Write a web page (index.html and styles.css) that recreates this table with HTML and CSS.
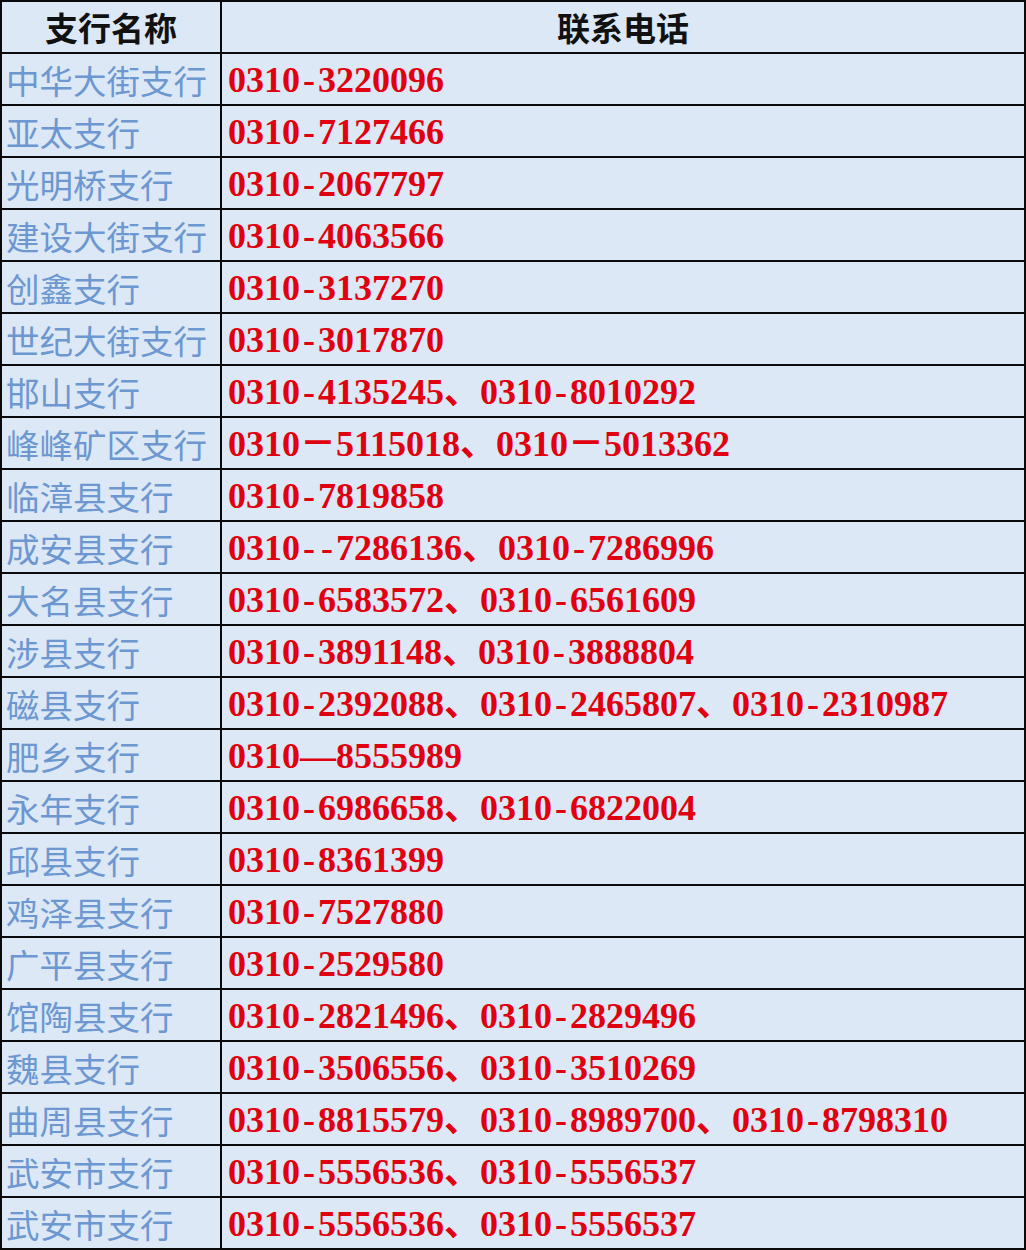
FILE: index.html
```html
<!DOCTYPE html>
<html lang="zh-CN">
<head>
<meta charset="utf-8">
<title>支行联系电话</title>
<link rel="stylesheet" href="styles.css">
</head>
<body>
<div class="table">
  <div class="cell head">支行名称</div>
  <div class="cell head center">联系电话</div>

  <div class="cell name">中华大街支行</div><div class="cell tel">0310<span class="d">-</span>3220096</div>
  <div class="cell name">亚太支行</div><div class="cell tel">0310<span class="d">-</span>7127466</div>
  <div class="cell name">光明桥支行</div><div class="cell tel">0310<span class="d">-</span>2067797</div>
  <div class="cell name">建设大街支行</div><div class="cell tel">0310<span class="d">-</span>4063566</div>
  <div class="cell name">创鑫支行</div><div class="cell tel">0310<span class="d">-</span>3137270</div>
  <div class="cell name">世纪大街支行</div><div class="cell tel">0310<span class="d">-</span>3017870</div>
  <div class="cell name">邯山支行</div><div class="cell tel">0310<span class="d">-</span>4135245、0310<span class="d">-</span>8010292</div>
  <div class="cell name">峰峰矿区支行</div><div class="cell tel">0310－5115018、0310－5013362</div>
  <div class="cell name">临漳县支行</div><div class="cell tel">0310<span class="d">-</span>7819858</div>
  <div class="cell name">成安县支行</div><div class="cell tel">0310<span class="d">-</span><span class="d">-</span>7286136、0310<span class="d">-</span>7286996</div>
  <div class="cell name">大名县支行</div><div class="cell tel">0310<span class="d">-</span>6583572、0310<span class="d">-</span>6561609</div>
  <div class="cell name">涉县支行</div><div class="cell tel">0310<span class="d">-</span>3891148、0310<span class="d">-</span>3888804</div>
  <div class="cell name">磁县支行</div><div class="cell tel">0310<span class="d">-</span>2392088、0310<span class="d">-</span>2465807、0310<span class="d">-</span>2310987</div>
  <div class="cell name">肥乡支行</div><div class="cell tel">0310—8555989</div>
  <div class="cell name">永年支行</div><div class="cell tel">0310<span class="d">-</span>6986658、0310<span class="d">-</span>6822004</div>
  <div class="cell name">邱县支行</div><div class="cell tel">0310<span class="d">-</span>8361399</div>
  <div class="cell name">鸡泽县支行</div><div class="cell tel">0310<span class="d">-</span>7527880</div>
  <div class="cell name">广平县支行</div><div class="cell tel">0310<span class="d">-</span>2529580</div>
  <div class="cell name">馆陶县支行</div><div class="cell tel">0310<span class="d">-</span>2821496、0310<span class="d">-</span>2829496</div>
  <div class="cell name">魏县支行</div><div class="cell tel">0310<span class="d">-</span>3506556、0310<span class="d">-</span>3510269</div>
  <div class="cell name">曲周县支行</div><div class="cell tel">0310<span class="d">-</span>8815579、0310<span class="d">-</span>8989700、0310<span class="d">-</span>8798310</div>
  <div class="cell name">武安市支行</div><div class="cell tel">0310<span class="d">-</span>5556536、0310<span class="d">-</span>5556537</div>
  <div class="cell name">武安市支行</div><div class="cell tel">0310<span class="d">-</span>5556536、0310<span class="d">-</span>5556537</div>
</div>
</body>
</html>
```
FILE: styles.css
```css
html, body {
  margin: 0;
  padding: 0;
  background: #ffffff;
}

.table {
  width: 1026px;
  height: 1250px;
  box-sizing: border-box;
  padding: 2px;
  background: #0a0a0a;
  display: grid;
  grid-template-columns: 218px 1fr;
  grid-auto-rows: 50px;
  gap: 2px;
}

.cell {
  background: #dce8f5;
  display: flex;
  align-items: center;
  white-space: nowrap;
  overflow: hidden;
}

.head {
  justify-content: center;
  font-family: "Noto Sans CJK SC", sans-serif;
  font-weight: 700;
  font-size: 33px;
  color: #111111;
}

.name {
  padding-left: 4px;
  font-family: "Noto Sans CJK SC", sans-serif;
  font-weight: 400;
  font-size: 33.5px;
  color: #6c97d0;
}

.tel {
  padding-left: 6px;
  padding-top: 1px;
  font-family: "Liberation Serif", "Noto Sans CJK SC", serif;
  font-weight: 700;
  font-size: 36px;
  line-height: 40px;
  color: #e0000f;
}

.tel .d {
  display: inline-block;
  width: 18px;
  text-align: center;
}
```
